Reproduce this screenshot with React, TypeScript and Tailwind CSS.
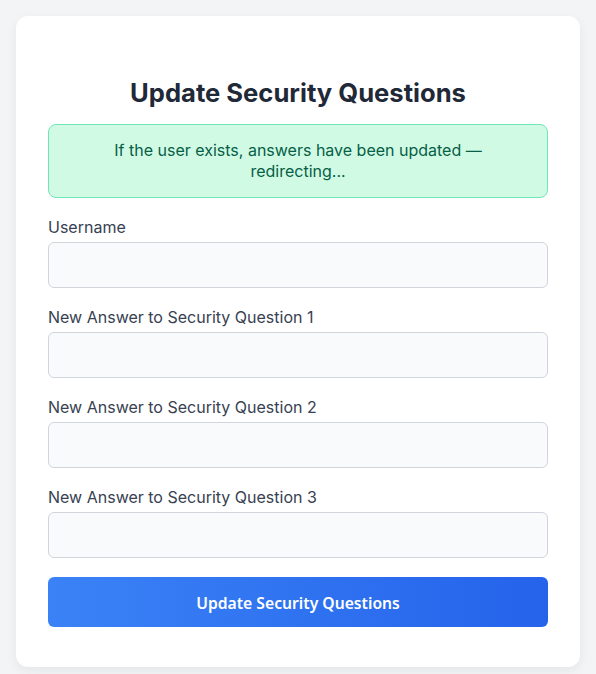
const FIELDS = [
  'Username',
  'New Answer to Security Question 1',
  'New Answer to Security Question 2',
  'New Answer to Security Question 3',
];

export default function App() {
  return (
    <div className="min-h-screen bg-[#f3f4f6] p-4 font-['Inter',sans-serif]">
      <div className="rounded-xl bg-white px-8 pt-[61px] pb-10 shadow-[0_4px_12px_rgba(0,0,0,0.06)]">
        <h1 className="mb-[15px] text-center text-[25.6px] leading-8 font-bold text-[#1f2937]">
          Update Security Questions
        </h1>

        <div className="mb-[17px] rounded-lg border border-[#6ee7b7] bg-[#d1fae5] px-4 py-[15px] text-center text-base leading-[21px] text-[#065f46]">
          If the user exists, answers have been updated — redirecting...
        </div>

        <form onSubmit={e => e.preventDefault()}>
          {FIELDS.map(label => (
            <div key={label} className="mb-[17px]">
              <label className="mb-[3px] block text-base leading-6 text-[#374151]">{label}</label>
              <input
                type="text"
                className="h-[46px] w-full rounded-md border border-[#d1d5db] bg-[#f9fafb] px-3 text-base outline-none"
              />
            </div>
          ))}

          <button
            type="submit"
            className="mt-[2px] h-[50px] w-full rounded-md bg-gradient-to-r from-[#3b82f6] to-[#2563eb] pt-[4px] font-['Noto_Sans',sans-serif] text-[15.7px] font-semibold text-white"
          >
            Update Security Questions
          </button>
        </form>
      </div>
    </div>
  );
}
